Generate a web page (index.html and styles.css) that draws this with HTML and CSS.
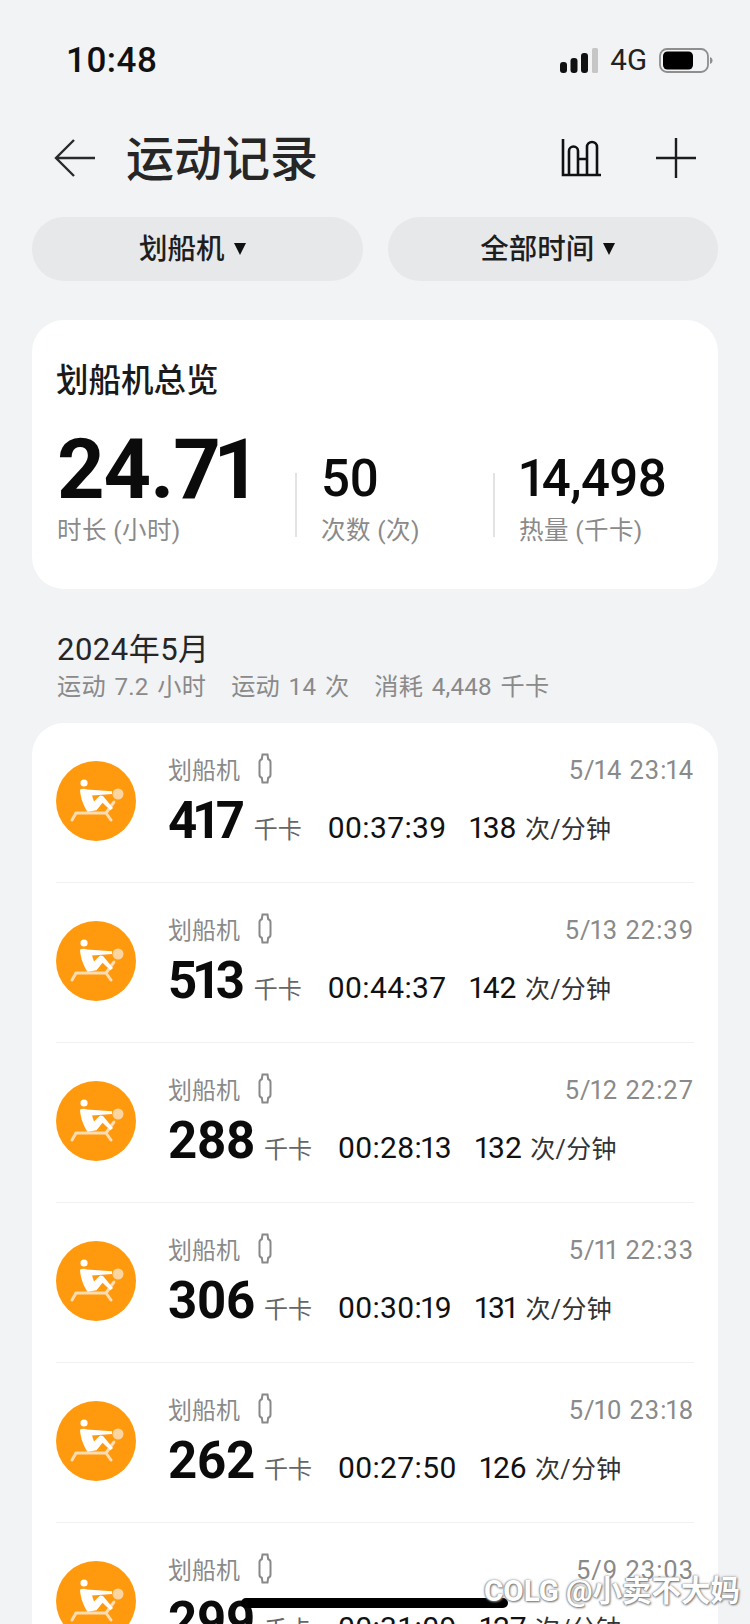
FILE: index.html
```html
<!DOCTYPE html>
<html lang="zh-CN">
<head>
<meta charset="utf-8">
<title>运动记录</title>
<link rel="stylesheet" href="styles.css">
</head>
<body>
<svg class="defs" width="0" height="0" aria-hidden="true">
  <symbol id="rower" viewBox="0 0 80 80">
    <circle cx="40" cy="40" r="40" fill="#ff9a0e"/>
    <circle cx="62" cy="33" r="5.500" fill="#fdd5a0"/>
    <path d="M16 59l4-7h30l8-11M50 52l5 7" fill="none" stroke="#fddcb0" stroke-width="3" stroke-linecap="round" stroke-linejoin="round"/>
    <circle cx="28" cy="22" r="3.600" fill="#fff"/>
    <path d="M24 28.500c2-1 5-1 7 0l25 1.800v2.700l-20 1.500 2 6 6-6 3 .5 10 12-2.500 2.300-8-7.500-6 7.500-9 1.500c-4-6-7-14-7.500-22z" fill="#fff"/>
  </symbol>
  <symbol id="band" viewBox="0 0 14 31">
    <path d="M4.500 1.500h5l.7 4.800c1.800.5 2.300 1.500 2.300 3v12.400c0 1.500-.5 2.500-2.300 3l-.7 4.800h-5l-.7-4.800c-1.800-.5-2.300-1.500-2.300-3V9.300c0-1.500.5-2.500 2.300-3z" fill="none" stroke="#888" stroke-width="2"/>
  </symbol>
</svg>

<div class="screen">
  <div class="status">
    <span class="clock">10:48</span>
    <div class="status-right">
      <svg class="signal" viewBox="0 0 38 25" width="38" height="25"><rect x="0" y="14" width="7" height="11" rx="3" fill="#111"/><rect x="10.500" y="10" width="7" height="15" rx="3" fill="#111"/><rect x="21" y="5" width="7" height="20" rx="3" fill="#111"/><rect x="32" y="0" width="6" height="25" rx="1.500" fill="#c6c6c6"/></svg>
      <span class="net">4G</span>
      <svg class="battery" viewBox="0 0 54 25" width="54" height="25"><rect x="1" y="1" width="48" height="23" rx="7" fill="none" stroke="#8e8e8e" stroke-width="1.800"/><rect x="4" y="3.500" width="30" height="18" rx="4.500" fill="#000"/><path d="M51 9c2 .8 2.500 2 2.500 3.500s-.5 2.700-2.500 3.500z" fill="#8e8e8e"/></svg>
    </div>
  </div>

  <header class="topbar">
    <svg class="back" viewBox="0 0 42 40" width="42" height="40"><path d="M20 2L2 20l18 18M2 20h39" fill="none" stroke="#2a2a2a" stroke-width="2.400"/></svg>
    <h1 class="title">运动记录</h1>
    <svg class="chart" viewBox="0 0 41 38" width="41" height="38"><path d="M3 0v36h38M9 36V12a4.500 4.500 0 0 1 9 0v24M18 20h9v16M27 36V8a5 5 0 0 1 10 0v28" fill="none" stroke="#111" stroke-width="2.600"/></svg>
    <svg class="plus" viewBox="0 0 40 40" width="40" height="40"><path d="M20 0v40M0 20h40" fill="none" stroke="#1c1c1c" stroke-width="2.400"/></svg>
  </header>

  <div class="filters">
    <div class="pill"><span>划船机</span><i class="caret"></i></div>
    <div class="pill"><span>全部时间</span><i class="caret"></i></div>
  </div>

  <section class="card overview">
    <h2 class="ov-title">划船机总览</h2>
    <div class="ov-stats">
      <div class="stat stat-main"><b class="big">24.7<span class="n1">1</span></b><span class="lbl">时长 (小时)</span></div>
      <div class="stat stat-mid"><b class="mid">50</b><span class="lbl">次数 (次)</span></div>
      <div class="stat stat-last"><b class="mid tight"><span class="n1 lead">1</span>4,498</b><span class="lbl">热量 (千卡)</span></div>
    </div>
  </section>

  <div class="month">
    <div class="month-name">2024年5月</div>
    <div class="month-sum"><span>运动 7.2 小时</span><span>运动 14 次</span><span>消耗 4,448 千卡</span></div>
  </div>

  <section class="card list">
    <article class="row">
      <svg class="avatar"><use href="#rower"/></svg>
      <div class="info">
        <div class="line1"><span class="name">划船机</span><svg class="band"><use href="#band"/></svg><span class="date">5/<span class="n1">1</span>4 23:<span class="n1">1</span>4</span></div>
        <div class="line2"><b class="kcal">4<span class="n1">1</span>7</b><span class="unit">千卡</span><span class="dur">00:37:39</span><span class="rate"><span class="n1">1</span>38 <small>次/分钟</small></span></div>
      </div>
    </article>
    <article class="row">
      <svg class="avatar"><use href="#rower"/></svg>
      <div class="info">
        <div class="line1"><span class="name">划船机</span><svg class="band"><use href="#band"/></svg><span class="date">5/<span class="n1">1</span>3 22:39</span></div>
        <div class="line2"><b class="kcal">5<span class="n1">1</span>3</b><span class="unit">千卡</span><span class="dur">00:44:37</span><span class="rate"><span class="n1">1</span>42 <small>次/分钟</small></span></div>
      </div>
    </article>
    <article class="row">
      <svg class="avatar"><use href="#rower"/></svg>
      <div class="info">
        <div class="line1"><span class="name">划船机</span><svg class="band"><use href="#band"/></svg><span class="date">5/<span class="n1">1</span>2 22:27</span></div>
        <div class="line2"><b class="kcal">288</b><span class="unit">千卡</span><span class="dur">00:28:<span class="n1">1</span>3</span><span class="rate"><span class="n1">1</span>32 <small>次/分钟</small></span></div>
      </div>
    </article>
    <article class="row">
      <svg class="avatar"><use href="#rower"/></svg>
      <div class="info">
        <div class="line1"><span class="name">划船机</span><svg class="band"><use href="#band"/></svg><span class="date">5/<span class="n1">1</span><span class="n1">1</span> 22:33</span></div>
        <div class="line2"><b class="kcal">306</b><span class="unit">千卡</span><span class="dur">00:30:<span class="n1">1</span>9</span><span class="rate"><span class="n1">1</span>3<span class="n1">1</span> <small>次/分钟</small></span></div>
      </div>
    </article>
    <article class="row">
      <svg class="avatar"><use href="#rower"/></svg>
      <div class="info">
        <div class="line1"><span class="name">划船机</span><svg class="band"><use href="#band"/></svg><span class="date">5/<span class="n1">1</span>0 23:<span class="n1">1</span>8</span></div>
        <div class="line2"><b class="kcal">262</b><span class="unit">千卡</span><span class="dur">00:27:50</span><span class="rate"><span class="n1">1</span>26 <small>次/分钟</small></span></div>
      </div>
    </article>
    <article class="row">
      <svg class="avatar"><use href="#rower"/></svg>
      <div class="info">
        <div class="line1"><span class="name">划船机</span><svg class="band"><use href="#band"/></svg><span class="date">5/9 23:03</span></div>
        <div class="line2"><b class="kcal">299</b><span class="unit">千卡</span><span class="dur">00:31:09</span><span class="rate"><span class="n1">1</span>27 <small>次/分钟</small></span></div>
      </div>
    </article>
  </section>

  <div class="home-bar"></div>
  <div class="watermark">COLG @小卖不大妈</div>
</div>
</body>
</html>
```

FILE: styles.css
```css
* { box-sizing: border-box; margin: 0; padding: 0; }
html, body { width: 750px; height: 1624px; overflow: hidden; }
body {
  background: #f1f3f5;
  color: #111;
  font-family: Roboto, "Noto Sans CJK SC", sans-serif;
}
.defs { position: absolute; }
.screen { position: relative; width: 750px; height: 1624px; overflow: hidden; }
.n1 { margin: 0 -.08em; }
.n1.lead { margin-left: -.03em; }

.status { height: 118px; padding: 41px 37px 0 66px; display: flex; justify-content: space-between; align-items: flex-start; }
.clock { font-size: 35px; font-weight: 500; line-height: 39px; color: #111; letter-spacing: .5px; }
.status-right { display: flex; align-items: center; gap: 12px; height: 39px; }
.net { font-size: 29.500px; line-height: 39px; color: #222; }

.topbar { height: 80px; padding: 0 54px; display: flex; align-items: center; }
.back { flex: none; }
.title { font-size: 48px; font-weight: 500; line-height: 60px; margin-left: 30px; color: #262626; flex: 1; position: relative; top: 2px; }
.chart { flex: none; margin-right: 55px; }
.plus { flex: none; }

.filters { margin-top: 19px; padding: 0 32px; display: flex; gap: 25px; }
.pill { flex: 1; height: 64px; border-radius: 32px; background: #e6e8ea; display: flex; align-items: center; justify-content: center; gap: 9px; font-size: 28.500px; font-weight: 500; color: #1e1e1e; padding: 0 10px 6px 0; }
.caret { width: 0; height: 0; border-left: 6.500px solid transparent; border-right: 6.500px solid transparent; border-top: 12px solid #111; margin-top: 5px; }

.card { background: #fff; border-radius: 32px; margin: 0 32px; }
.overview { margin-top: 39px; height: 269px; padding: 41px 25px 0; }
.ov-title { font-size: 32.500px; font-weight: 500; line-height: 40px; color: #1a1a1a; margin-left: -1px; }
.ov-stats { display: flex; margin-top: 30px; }
.stat { display: flex; flex-direction: column; justify-content: flex-end; position: relative; }
.stat-main { width: 238px; }
.stat-mid { width: 198px; padding-left: 26px; }
.stat-last { padding-left: 26px; }
.stat-mid::before, .stat-last::before { content: ""; position: absolute; left: 0; bottom: 10px; width: 2px; height: 64px; background: #e3e3e3; }
.big { font-size: 83px; font-weight: 700; line-height: 78px; letter-spacing: -1px; color: #0b0b0b; margin-bottom: -2px; }
.mid { font-size: 51px; font-weight: 500; line-height: 50px; letter-spacing: -.3px; color: #0b0b0b; margin-bottom: 3px; }
.mid.tight { letter-spacing: -.6px; }
.lbl { font-size: 24.500px; line-height: 32px; margin-top: 8px; color: #8a8a8a; letter-spacing: .4px; }

.month { margin-top: 43px; padding: 0 57px; }
.month-name { font-size: 31px; line-height: 36px; letter-spacing: .5px; color: #262626; }
.month-sum { display: flex; gap: 25px; margin-top: 2px; font-size: 24.200px; line-height: 34px; letter-spacing: .2px; word-spacing: 2.500px; color: #8a8a8a; }

.list { margin-top: 19px; padding: 0 24px; }
.row { height: 160px; display: flex; padding-top: 38px; border-bottom: 1px solid #f1f1f1; }
.avatar { width: 80px; height: 80px; flex: none; }
.info { flex: 1; margin-left: 32px; min-width: 0; }
.line1 { display: flex; align-items: center; height: 31px; font-size: 24px; color: #8a8a8a; margin-top: -8px; }
.band { width: 14px; height: 31px; margin-left: 18px; }
.date { margin-left: auto; font-size: 25.500px; letter-spacing: 1px; position: relative; top: 1px; }
.line2 { display: flex; align-items: baseline; margin-top: 9px; line-height: 56px; }
.kcal { font-size: 51px; font-weight: 700; letter-spacing: -.3px; color: #0b0b0b; }
.kcal .n1 { margin: 0 -.1em; }
.unit { font-size: 24px; color: #666; margin-left: 9px; }
.dur { font-size: 30px; margin-left: 26px; color: #111; letter-spacing: .4px; }
.rate { font-size: 30px; margin-left: 24px; color: #111; }
.rate small { font-size: 25px; color: #333; letter-spacing: .3px; margin-left: 1px; }

.home-bar { position: absolute; left: 241px; top: 1598px; width: 267px; height: 10px; border-radius: 5px; background: #000; }
.watermark { position: absolute; left: 484px; top: 1572px; font-size: 29.500px; line-height: 38px; color: #fff; font-weight: 700; white-space: nowrap; text-shadow: 1px 1px 2px #777, -1px 0 1px #aaa, 0 0 3px #999; }
```
